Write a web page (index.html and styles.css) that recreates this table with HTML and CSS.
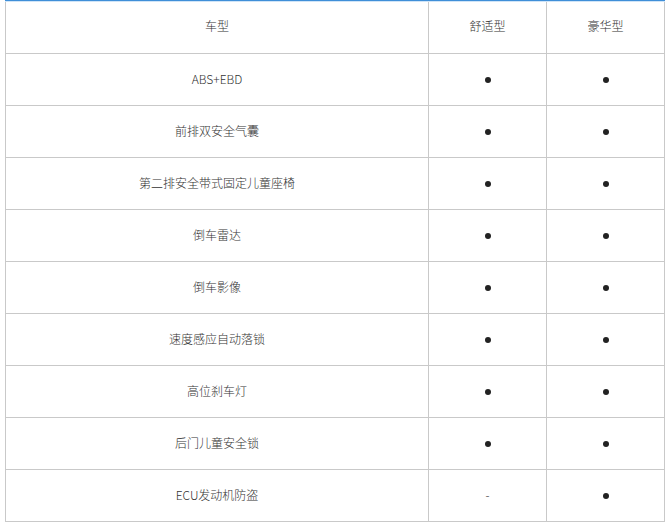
FILE: index.html
```html
<!DOCTYPE html>
<html>
<head>
<meta charset="utf-8">
<link rel="stylesheet" href="styles.css">
</head>
<body>
<div class="topline"></div>
<table class="spec">
  <tr class="head"><td class="c1">车型</td><td class="c2">舒适型</td><td class="c3">豪华型</td></tr>
  <tr><td>ABS+EBD</td><td><span class="dot"></span></td><td><span class="dot"></span></td></tr>
  <tr><td>前排双安全气囊</td><td><span class="dot"></span></td><td><span class="dot"></span></td></tr>
  <tr><td>第二排安全带式固定儿童座椅</td><td><span class="dot"></span></td><td><span class="dot"></span></td></tr>
  <tr><td>倒车雷达</td><td><span class="dot"></span></td><td><span class="dot"></span></td></tr>
  <tr><td>倒车影像</td><td><span class="dot"></span></td><td><span class="dot"></span></td></tr>
  <tr><td>速度感应自动落锁</td><td><span class="dot"></span></td><td><span class="dot"></span></td></tr>
  <tr><td>高位刹车灯</td><td><span class="dot"></span></td><td><span class="dot"></span></td></tr>
  <tr><td>后门儿童安全锁</td><td><span class="dot"></span></td><td><span class="dot"></span></td></tr>
  <tr><td>ECU发动机防盗</td><td>-</td><td><span class="dot"></span></td></tr>
</table>
</body>
</html>
```
FILE: styles.css
```css
html, body {
  margin: 0;
  padding: 0;
  background: #fff;
}
body {
  font-family: "Noto Sans CJK SC", "Microsoft YaHei", sans-serif;
  font-size: 12px;
  font-weight: 300;
  color: #333;
}
.topline {
  position: absolute;
  left: 5px;
  top: 0;
  width: 660px;
  height: 2px;
  background: linear-gradient(#3f8fd8 0 1px, #cfe4f7 1px 2px);
}
.spec {
  border-collapse: collapse;
  margin: -1px 0 0 5px;
  width: 660px;
  table-layout: fixed;
}
.spec td {
  border: 1px solid #c9c9c9;
  height: 49px;
  padding: 0 0 2px;
  text-align: center;
  vertical-align: middle;
  line-height: 16px;
}
.spec .head td {
  height: 51px;
  border-top-color: transparent;
}
.spec .c1 { width: 422px; }
.spec .c2 { width: 117px; }
.dot {
  display: inline-block;
  width: 6px;
  height: 6px;
  border-radius: 50%;
  background: #222;
  vertical-align: middle;
  position: relative;
  top: 0;
}
```
